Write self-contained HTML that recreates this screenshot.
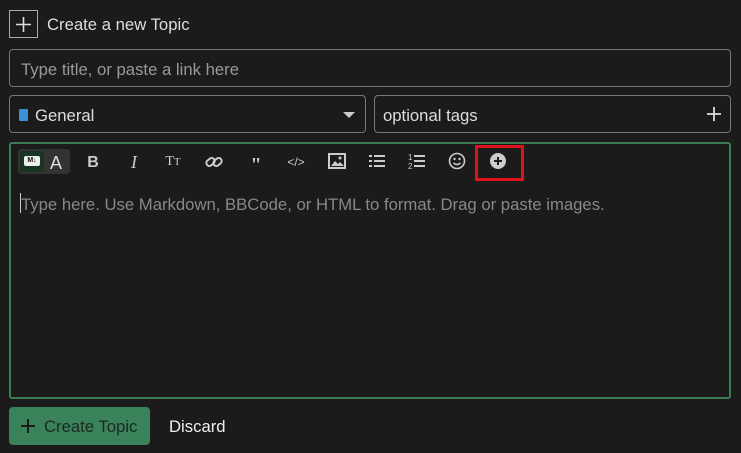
<!DOCTYPE html>
<html><head><style>
*{box-sizing:border-box;margin:0;padding:0}
body{width:741px;height:453px;background:#1b1b1b;font-family:"Liberation Sans",sans-serif;color:#ddd;position:relative;overflow:hidden}
.a{position:absolute}
.t{font-size:16.7px}
.box{border:1px solid #777;border-radius:4px}
.ic{position:absolute;top:152px;width:20px;height:20px;color:#ccc;font-size:16px;text-align:center;line-height:20px}
</style></head><body>
<div class="a" style="left:9px;top:10px;width:29px;height:28px;border:1px solid #aaa"></div>
<svg class="a" style="left:15px;top:16px" width="17" height="17"><path d="M8.5 1v15M1 8.5h15" stroke="#ddd" stroke-width="1.6"/></svg>
<div class="a t" style="left:47px;top:15px;color:#ddd">Create a new Topic</div>
<div class="a box" style="left:9px;top:49px;width:722px;height:38px"></div>
<div class="a t" style="left:21px;top:60px;color:#999">Type title, or paste a link here</div>
<div class="a box" style="left:9px;top:95px;width:357px;height:38px"></div>
<div class="a" style="left:19px;top:109px;width:9px;height:12px;background:#3b8fd6;border-radius:1px"></div>
<div class="a t" style="left:35px;top:106px;color:#ddd">General</div>
<div class="a" style="left:343px;top:112px;width:0;height:0;border-left:6px solid transparent;border-right:6px solid transparent;border-top:6px solid #ccc"></div>
<div class="a box" style="left:374px;top:95px;width:357px;height:38px"></div>
<div class="a t" style="left:383px;top:106px;color:#ddd">optional tags</div>
<svg class="a" style="left:707px;top:107px" width="14" height="14"><path d="M7 0v14M0 7h14" stroke="#ddd" stroke-width="1.8"/></svg>
<div class="a" style="left:9px;top:142px;width:722px;height:257px;border:2px solid #3a7d53;border-radius:3px"></div>
<div class="a" style="left:18px;top:149px;width:52px;height:25px;background:#333;border-radius:4px"></div>
<div class="a" style="left:20px;top:151px;width:24px;height:21px;background:#183523;border-radius:3px"></div>
<div class="a" style="left:24px;top:156px;width:16px;height:10px;background:#eee;border-radius:2px;font-size:7px;font-weight:bold;color:#111;text-align:center;line-height:10px">M↓</div>
<div class="ic" style="left:46px;font-size:18px;color:#ddd;top:153px">A</div>
<div class="ic" style="left:83px;font-weight:bold;top:153px">B</div>
<div class="ic" style="left:124px;font-family:'Liberation Serif',serif;font-style:italic;font-size:18px">I</div>
<div class="ic" style="left:163px;font-family:'Liberation Serif',serif;font-size:14px">T<span style="font-size:11px">T</span></div>
<svg class="a" style="left:205px;top:153px" width="18" height="18"><g fill="none" stroke="#ccc" stroke-width="2"><rect x="1" y="6" width="9" height="6" rx="3" transform="rotate(-40 5.5 9)"/><rect x="8" y="6" width="9" height="6" rx="3" transform="rotate(-40 12.5 9)"/></g></svg>
<div class="ic" style="left:246px;font-weight:bold;font-size:20px;font-family:'Liberation Serif',serif;top:155px">"</div>
<div class="ic" style="left:286px;font-size:12px">&lt;/&gt;</div>
<svg class="a" style="left:328px;top:153px" width="18" height="16"><rect x="1" y="1" width="16" height="14" fill="none" stroke="#ccc" stroke-width="2"/><path d="M3 13l4-5 3 3 2-2 4 4z" fill="#ccc"/><circle cx="12" cy="5" r="1.5" fill="#ccc"/></svg>
<svg class="a" style="left:368px;top:153px" width="18" height="16"><g fill="#ccc"><rect x="1" y="2" width="3" height="2"/><rect x="1" y="7" width="3" height="2"/><rect x="1" y="12" width="3" height="2"/><rect x="6" y="2" width="11" height="2"/><rect x="6" y="7" width="11" height="2"/><rect x="6" y="12" width="11" height="2"/></g></svg>
<svg class="a" style="left:408px;top:152px" width="18" height="18"><g fill="#ccc"><text x="0" y="8" font-size="8" fill="#ccc" font-family="Liberation Sans">1</text><text x="0" y="17" font-size="8" fill="#ccc" font-family="Liberation Sans">2</text><rect x="6" y="3" width="11" height="2"/><rect x="6" y="8" width="11" height="2"/><rect x="6" y="13" width="11" height="2"/></g></svg>
<svg class="a" style="left:448px;top:152px" width="18" height="18"><circle cx="9" cy="9" r="7.5" fill="none" stroke="#ccc" stroke-width="1.6"/><circle cx="6.5" cy="7" r="1.2" fill="#ccc"/><circle cx="11.5" cy="7" r="1.2" fill="#ccc"/><path d="M5.5 11q3.5 3 7 0" fill="none" stroke="#ccc" stroke-width="1.5"/></svg>
<svg class="a" style="left:489px;top:152px" width="18" height="18"><circle cx="9" cy="9" r="8" fill="#ccc"/><path d="M9 5v8M5 9h8" stroke="#1b1b1b" stroke-width="2"/></svg>
<div class="a" style="left:475px;top:145px;width:49px;height:36px;border:3px solid #e0121b"></div>
<div class="a" style="left:20px;top:193px;width:1px;height:20px;background:#ccc"></div>
<div class="a t" style="left:21px;top:195px;color:#888">Type here. Use Markdown, BBCode, or HTML to format. Drag or paste images.</div>
<div class="a" style="left:9px;top:407px;width:141px;height:38px;background:#39825a;border-radius:4px"></div>
<svg class="a" style="left:21px;top:419px" width="14" height="14"><path d="M7 0v14M0 7h14" stroke="#1b1b1b" stroke-width="2"/></svg>
<div class="a t" style="left:44px;top:417px;color:#1b2a21">Create Topic</div>
<div class="a t" style="left:169px;top:417px;color:#eee">Discard</div>
</body></html>
